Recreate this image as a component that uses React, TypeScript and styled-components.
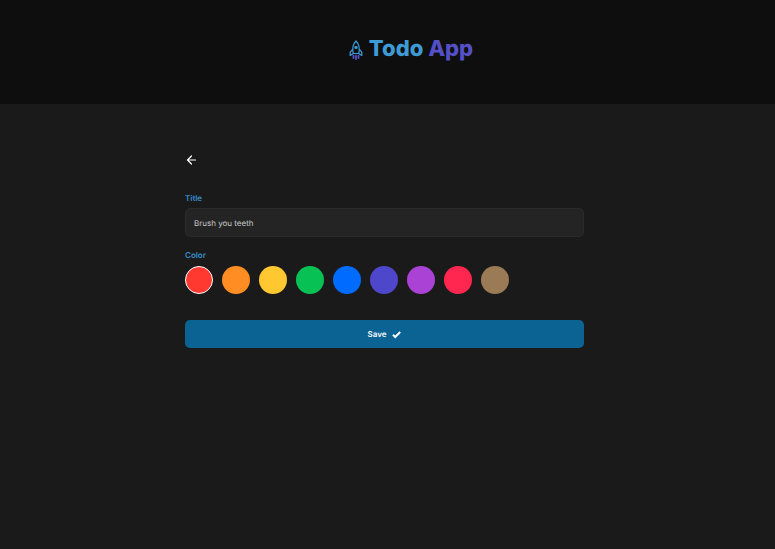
import React, { useState } from "react";
import styled, { createGlobalStyle } from "styled-components";

const GlobalStyle = createGlobalStyle`
  *, *::before, *::after { box-sizing: border-box; }
  body {
    margin: 0;
    background: #1a1a1a;
    color: #f2f2f2;
    font-family: Inter, "Liberation Sans", sans-serif;
    font-size: 8px;
    line-height: 12px;
    text-rendering: geometricPrecision;
  }
  button, input { font: inherit; text-rendering: inherit; }
`;

const Header = styled.header`
  display: flex;
  justify-content: center;
  padding: 34px 0 40px 47px;
  background: #0e0e0e;
`;

const Brand = styled.h1`
  display: flex;
  align-items: center;
  gap: 6px;
  margin: 0;
  font-size: 22px;
  line-height: 30px;
  font-weight: 800;
  color: #3d9cd6;
`;

const BrandAccent = styled.span`
  color: #5550c7;
`;

const RocketSvg = styled.svg`
  width: 14px;
  height: 20px;
  margin-top: 2px;
  overflow: visible;
`;

const Main = styled.main`
  padding: 49px 20px 40px 14px;
`;

const Form = styled.form`
  display: flex;
  flex-direction: column;
  max-width: 399px;
  margin: 0 auto;
`;

const BackButton = styled.button`
  display: flex;
  align-self: flex-start;
  padding: 0;
  border: 0;
  background: none;
  color: #ffffff;
  cursor: pointer;
`;

const BackSvg = styled.svg`
  width: 14px;
  height: 14px;
`;

const Label = styled.label`
  margin-top: 25px;
  color: #3590cb;
  font-weight: 600;
`;

const Fieldset = styled.fieldset`
  min-width: 0;
  margin: 12px 0 0;
  padding: 0;
  border: 0;
`;

const Legend = styled.legend`
  padding: 0;
  color: #3590cb;
  font-weight: 600;
`;

const TextInput = styled.input`
  width: 100%;
  height: 29px;
  margin-top: 4px;
  padding: 0 8px;
  border: 1px solid #2b2b2b;
  border-radius: 5px;
  background: #242424;
  color: #c8c8c8;
  outline: none;
`;

const Swatches = styled.div`
  display: flex;
  flex-wrap: wrap;
  gap: 9px;
  margin-top: 5px;
`;

const Swatch = styled.input<{ $color: string }>`
  appearance: none;
  width: 28px;
  height: 28px;
  margin: 0;
  border-radius: 50%;
  background: ${(p) => p.$color};
  cursor: pointer;

  &:checked {
    border: 1px solid #ffffff;
  }
`;

const SaveButton = styled.button`
  display: flex;
  align-items: center;
  justify-content: center;
  gap: 6px;
  height: 28px;
  margin-top: 26px;
  padding: 0;
  border: 0;
  border-radius: 5px;
  background: #0b6394;
  color: #f5f8fa;
  font-weight: 600;
  cursor: pointer;
`;

const CheckSvg = styled.svg`
  width: 9px;
  height: 9px;
`;

function Rocket() {
  return (
    <RocketSvg viewBox="0 0 14 20" fill="none" stroke="#3d9cd6" strokeWidth="1.2" strokeLinejoin="round" strokeLinecap="round" aria-hidden="true">
      <path d="M4.3 13.5C3.2 9 3.7 4.3 7 1c3.3 3.3 3.8 8 2.7 12.5Z" />
      <path d="M3.6 9.4 1.2 12.2v3.2l3.1-1.9M10.4 9.4l2.4 2.8v3.2l-3.1-1.9" />
      <circle cx="7" cy="7.4" r="1.1" fill="#3d9cd6" />
      <path d="M4.5 15.7v2.3M7 15.7v3.3M9.5 15.7v2.3" stroke="#5550c7" strokeWidth="1.8" />
    </RocketSvg>
  );
}

const COLORS = [
  { name: "Red", value: "#ff3830" },
  { name: "Orange", value: "#ff8d24" },
  { name: "Yellow", value: "#ffc730" },
  { name: "Green", value: "#07c155" },
  { name: "Blue", value: "#006cff" },
  { name: "Indigo", value: "#4d48cb" },
  { name: "Purple", value: "#a942d5" },
  { name: "Pink", value: "#ff274f" },
  { name: "Brown", value: "#9b7a56" },
];

export default function App() {
  const [title, setTitle] = useState("Brush you teeth");
  const [color, setColor] = useState("Red");

  return (
    <>
      <GlobalStyle />
      <Header>
        <Brand>
          <Rocket />
          <span>
            Todo <BrandAccent>App</BrandAccent>
          </span>
        </Brand>
      </Header>
      <Main>
        <Form onSubmit={(e) => e.preventDefault()}>
          <BackButton type="button" aria-label="Back">
            <BackSvg viewBox="0 0 14 14" fill="none" stroke="currentColor" strokeWidth="1.2" strokeLinecap="round" strokeLinejoin="round" aria-hidden="true">
              <path d="M10.5 7H2.5M6.5 3l-4 4 4 4" />
            </BackSvg>
          </BackButton>
          <Label htmlFor="title">Title</Label>
          <TextInput id="title" value={title} onChange={(e) => setTitle(e.target.value)} />
          <Fieldset>
            <Legend>Color</Legend>
            <Swatches>
              {COLORS.map((c) => (
                <Swatch
                  key={c.name}
                  type="radio"
                  name="color"
                  aria-label={c.name}
                  $color={c.value}
                  checked={color === c.name}
                  onChange={() => setColor(c.name)}
                />
              ))}
            </Swatches>
          </Fieldset>
          <SaveButton type="submit">
            Save
            <CheckSvg viewBox="0 0 9 9" fill="none" stroke="currentColor" strokeWidth="2" aria-hidden="true">
              <path d="m1 4.8 2.2 2.2L8.2 2" />
            </CheckSvg>
          </SaveButton>
        </Form>
      </Main>
    </>
  );
}
